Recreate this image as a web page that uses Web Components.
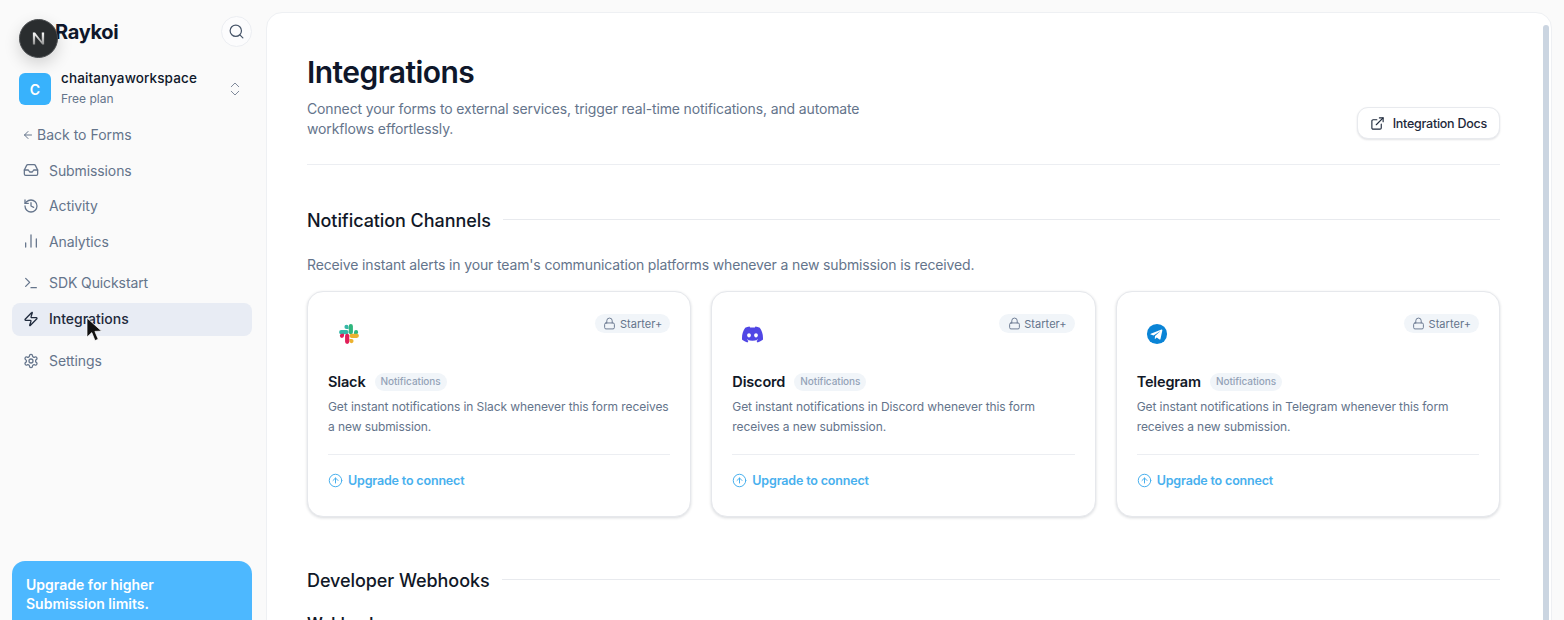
<!DOCTYPE html>
<html lang="en"><head><meta charset="utf-8"><title>Integrations</title>
<style>
html,body{margin:0;height:620px;overflow:hidden;background:#fafafa;font-family:Inter,"Liberation Sans",sans-serif;color:#0f172a}
</style></head><body>
<app-shell>
  <side-bar slot="side"></side-bar>
  <main-panel slot="main"></main-panel>
</app-shell>
<script>
const I={
 search:'<circle cx="11" cy="11" r="8"/><path d="m21 21-4.300-4.300"/>',
 updown:'<path d="m7 15 5 5 5-5"/><path d="m7 9 5-5 5 5"/>',
 back:'<path d="m12 19-7-7 7-7"/><path d="M19 12H5"/>',
 inbox:'<path d="M22 12h-6l-2 3h-4l-2-3H2"/><path d="M5.45 5.11 2 12v6a2 2 0 0 0 2 2h16a2 2 0 0 0 2-2v-6l-3.45-6.89A2 2 0 0 0 16.76 4H7.24a2 2 0 0 0-1.79 1.11z"/>',
 history:'<path d="M3 12a9 9 0 1 0 9-9 9.75 9.75 0 0 0-6.74 2.74L3 8"/><path d="M3 3v5h5"/><path d="M12 7v5l4 2"/>',
 chart:'<path d="M4 21v-6"/><path d="M12 21V3"/><path d="M20 21V9"/>',
 term:'<path d="m4 17 6-6-6-6"/><path d="M12 19h8"/>',
 zap:'<path d="M4 14a1 1 0 0 1-.78-1.63l9.9-10.2a.5.5 0 0 1 .86.46l-1.92 6.02A1 1 0 0 0 13 10h7a1 1 0 0 1 .78 1.63l-9.9 10.2a.5.5 0 0 1-.86-.46l1.92-6.02A1 1 0 0 0 11 14z"/>',
 gear:'<path d="M12.22 2h-.44a2 2 0 0 0-2 2v.18a2 2 0 0 1-1 1.73l-.43.25a2 2 0 0 1-2 0l-.15-.08a2 2 0 0 0-2.73.73l-.22.38a2 2 0 0 0 .73 2.73l.15.1a2 2 0 0 1 1 1.72v.51a2 2 0 0 1-1 1.74l-.15.09a2 2 0 0 0-.73 2.73l.22.38a2 2 0 0 0 2.73.73l.15-.08a2 2 0 0 1 2 0l.43.25a2 2 0 0 1 1 1.73V20a2 2 0 0 0 2 2h.44a2 2 0 0 0 2-2v-.18a2 2 0 0 1 1-1.73l.43-.25a2 2 0 0 1 2 0l.15.08a2 2 0 0 0 2.73-.73l.22-.39a2 2 0 0 0-.73-2.73l-.15-.08a2 2 0 0 1-1-1.74v-.5a2 2 0 0 1 1-1.74l.15-.09a2 2 0 0 0 .73-2.73l-.22-.38a2 2 0 0 0-2.73-.73l-.15.08a2 2 0 0 1-2 0l-.43-.25a2 2 0 0 1-1-1.73V4a2 2 0 0 0-2-2z"/><circle cx="12" cy="12" r="3"/>',
 ext:'<path d="M15 3h6v6"/><path d="M10 14 21 3"/><path d="M18 13v6a2 2 0 0 1-2 2H5a2 2 0 0 1-2-2V8a2 2 0 0 1 2-2h6"/>',
 lock:'<rect x="3" y="11" width="18" height="11" rx="2.500"/><path d="M7 11V7a5 5 0 0 1 10 0v4"/>',
 up:'<circle cx="12" cy="12" r="10"/><path d="m16 12-4-4-4 4"/><path d="M12 16V8"/>'
};
const svg=(n,s,w=2)=>`<svg width="${s}" height="${s}" viewBox="0 0 24 24" fill="none" stroke="currentColor" stroke-width="${w}" stroke-linecap="round" stroke-linejoin="round" style="display:block;flex:none">${I[n]}</svg>`;
const LOGOS={
 slack:`<svg width="20" height="20" viewBox="0 0 24 24" style="display:block"><path fill="#36b7a8" d="M9 1a2.500 2.500 0 0 0 0 5h2.500V3.500A2.500 2.500 0 0 0 9 1zM9 7.300H2.600a2.500 2.500 0 0 0 0 5H9a2.500 2.500 0 0 0 0-5z"/><path fill="#2eb67d" d="M23 9.800a2.500 2.500 0 0 0-5 0v2.500h2.500A2.500 2.500 0 0 0 23 9.800zM16.700 9.800V2.600a2.500 2.500 0 0 0-5 0v7.200a2.500 2.500 0 0 0 5 0z"/><path fill="#ecb22e" d="M15 23a2.500 2.500 0 0 0 0-5h-2.500v2.500A2.500 2.500 0 0 0 15 23zM15 16.700h6.400a2.500 2.500 0 0 0 0-5H15a2.500 2.500 0 0 0 0 5z"/><path fill="#e01e5a" d="M1 14.200a2.500 2.500 0 0 0 5 0v-2.500H3.500A2.500 2.500 0 0 0 1 14.200zM7.300 14.200v7.200a2.500 2.500 0 0 0 5 0v-7.200a2.500 2.500 0 0 0-5 0z"/></svg>`,
 discord:`<svg width="21" height="21" viewBox="0 0 24 24" style="display:block"><path fill="#5046e5" d="M20.320 4.370a19.800 19.800 0 0 0-4.890-1.520.07.07 0 0 0-.08.04c-.21.38-.45.870-.61 1.250a18.270 18.270 0 0 0-5.490 0 12.640 12.640 0 0 0-.62-1.250.08.08 0 0 0-.08-.04 19.740 19.740 0 0 0-4.880 1.520.07.07 0 0 0-.03.030C.530 9.050-.320 13.580.100 18.060a.08.08 0 0 0 .03.060 19.900 19.900 0 0 0 5.990 3.030.08.08 0 0 0 .08-.03c.46-.63.870-1.300 1.230-1.990a.08.08 0 0 0-.04-.110 13.100 13.100 0 0 1-1.870-.89.08.08 0 0 1-.01-.130l.37-.290a.07.07 0 0 1 .08-.010c3.930 1.790 8.180 1.790 12.060 0a.07.07 0 0 1 .08.010l.37.290a.08.08 0 0 1-.01.130 12.300 12.300 0 0 1-1.870.890.08.08 0 0 0-.04.110c.36.700.77 1.360 1.230 1.990a.08.08 0 0 0 .08.030 19.840 19.840 0 0 0 6-3.030.08.08 0 0 0 .03-.060c.5-5.180-.84-9.670-3.550-13.660a.06.060 0 0 0-.03-.030zM8.020 15.330c-1.180 0-2.160-1.090-2.160-2.420 0-1.330.96-2.420 2.160-2.420 1.210 0 2.180 1.100 2.160 2.420 0 1.330-.96 2.420-2.160 2.420zm7.980 0c-1.180 0-2.160-1.090-2.160-2.420 0-1.330.96-2.420 2.160-2.420 1.210 0 2.180 1.100 2.160 2.420 0 1.330-.95 2.420-2.160 2.420z"/></svg>`,
 telegram:`<svg width="22" height="22" viewBox="0 0 24 24" style="display:block"><circle cx="12" cy="12" r="11" fill="#0a84d6" /><path fill="#fff" d="M5.200 11.800 16.900 7.200c.6-.2 1 .1.900.9l-2 9.300c-.1.700-.6.800-1.100.5l-3-2.200-1.500 1.400c-.2.200-.3.300-.6.300l.2-3.100 5.500-5c.2-.2 0-.3-.3-.1l-6.800 4.300-2.900-.9c-.7-.2-.7-.6.100-1z"/></svg>`
};
function def(name,css,html){
  customElements.define(name,class extends HTMLElement{
    constructor(){super();const r=this.attachShadow({mode:'open'});
      r.innerHTML=`<style>${css}</style>`+(typeof html==='function'?html(this):html);}
  });
}
def('app-shell',`:host{display:flex;height:620px;width:1564px;overflow:hidden;position:relative}
 .s{flex:0 0 266px;display:block;height:620px}.m{flex:1;min-width:0;padding:12px 12px 0 0;display:flex}`,
 `<div class="s"><slot name="side"></slot></div><div class="m"><slot name="main"></slot></div>`);

def('nav-item',`:host{display:flex;align-items:center;gap:10px;height:33.5px;padding:0 11px;border-radius:8px;font-size:14px;color:#64748b;letter-spacing:-.1px}
 :host([active]){background:#e8ecf4;color:#1e293b;font-weight:500;height:33px;letter-spacing:0;padding-bottom:2px;box-sizing:border-box}
 :host([tight]){gap:3px;padding:0 10px;letter-spacing:0}`,
 el=>`${svg(el.getAttribute('icon'),el.hasAttribute('tight')?12:16,el.hasAttribute('tight')?2:1.9)}<slot></slot>`);

def('side-bar',`:host{display:flex;flex-direction:column;height:620px;box-sizing:border-box;padding:0 14px 0 12px;position:relative;overflow:hidden}
 .top{display:flex;align-items:center;justify-content:space-between;height:31px;margin-top:16px}
 .brand{font-size:20px;font-weight:700;letter-spacing:-.3px;color:#0f172a;margin-left:43px}
 .sb{width:31px;height:31px;box-sizing:border-box;border:1px solid #eceef2;border-radius:50%;background:#fcfcfd;display:flex;align-items:center;justify-content:center;color:#475569}
 .ws{display:flex;align-items:center;margin:26px 0 0 7px;height:32px}
 .av{width:32px;height:32px;border-radius:6px;background:#38b2fc;color:#fff;font-weight:600;font-size:14px;display:flex;align-items:center;justify-content:center}
 .wt{margin-left:10px;flex:1}
 .wn{font-size:13.5px;font-weight:500;color:#0f172a;line-height:17px;margin-top:-2px;letter-spacing:.12px}
 .wp{font-size:12px;color:#64748b;line-height:16px;margin-top:4px}
 .ch{color:#7c8798;margin-right:8px}
 nav{display:flex;flex-direction:column;gap:2px;margin-top:13px}
 .gap{height:4px}.gap2{height:4px}
 .sdk{margin-bottom:1.5px}
 .up{position:absolute;left:12px;top:561px;width:240px;height:120px;box-sizing:border-box;background:#4db8ff;border-radius:13px;padding:14px;color:#fff;font-weight:600;font-size:14px;line-height:19px}`,
 `<div class="top"><span class="brand">Raykoi</span><div class="sb">${svg('search',17,1.7)}</div></div>
 <div class="ws"><div class="av">C</div><div class="wt"><div class="wn">chaitanyaworkspace</div><div class="wp">Free plan</div></div><div class="ch">${svg('updown',18,1.3)}</div></div>
 <nav>
 <nav-item icon="back" tight>Back to Forms</nav-item>
 <nav-item icon="inbox">Submissions</nav-item>
 <nav-item icon="history">Activity</nav-item>
 <nav-item icon="chart">Analytics</nav-item>
 <div class="gap"></div>
 <nav-item icon="term" class="sdk">SDK Quickstart</nav-item>
 <nav-item icon="zap" active>Integrations</nav-item>
 <div class="gap2"></div>
 <nav-item icon="gear">Settings</nav-item>
 </nav>
 <div class="up">Upgrade for higher<br>Submission limits.</div>`);

def('section-title',`:host{display:flex;align-items:center;gap:12px;font-size:18px;font-weight:500;color:#111827;line-height:24px;letter-spacing:-.07px}
 i{flex:1;height:1px;background:#e8eaee;margin-bottom:3px}`,`<slot></slot><i></i>`);

def('integration-card',`:host{display:block;box-sizing:border-box;height:226px;padding:20px;background:#fff;border:1px solid #e6e8ec;border-radius:16px;box-shadow:0 1px 3px rgba(15,23,42,.16)}
 .h{display:flex;justify-content:space-between;align-items:flex-start;height:44px}
 .logo{width:41px;height:44px;display:flex;align-items:center;justify-content:center}
 .lock{display:flex;align-items:center;gap:3.500px;height:19px;padding:0 8px 0 8.500px;border-radius:10px;background:#f1f5f9;color:#64748b;font-size:11px;margin-top:2px;letter-spacing:.04px}
 .t{display:flex;align-items:center;gap:9px;margin-top:15px;height:20px}
 b{font-size:14.5px;font-weight:600;color:#111827;letter-spacing:-.15px}
 .n{font-size:10px;color:#94a3b8;background:#f1f5f9;border-radius:10px;height:18px;line-height:16px;padding:0 6px;font-weight:500;margin-top:1px;letter-spacing:-.05px}
 p{margin:6px 0 0;font-size:12px;line-height:20px;color:#64748b;letter-spacing:-.085px;height:40px}
 hr{border:0;height:1px;background:#eceef2;margin:17px 0 0}
 .u{display:flex;align-items:center;gap:5px;margin-top:17px;color:#48b0ee;font-size:12.5px;font-weight:600;height:17px;letter-spacing:-.17px}`,
 el=>{const n=el.getAttribute('name');return `<div class="h"><div class="logo">${LOGOS[n.toLowerCase()]}</div><div class="lock">${svg('lock',13,1.7)}Starter+</div></div>
 <div class="t"><b>${n}</b><span class="n">Notifications</span></div>
 <p>Get instant notifications in ${n} whenever this form receives a new submission.</p><hr>
 <div class="u">${svg('up',15,1.6)}Upgrade to connect</div>`});

def('docs-button',`:host{display:flex;align-items:center;gap:8px;height:32px;box-sizing:border-box;padding:0 12px;background:#fff;border:1px solid #e8eaee;border-radius:11px;box-shadow:0 1px 2px rgba(15,23,42,.12);font-size:12.5px;font-weight:500;color:#1e293b;letter-spacing:-.25px}`,
 `${svg('ext',15,1.8)}<slot></slot>`);

def('main-panel',`:host{display:block;flex:1;min-width:0;height:640px;position:relative;box-sizing:border-box;background:#fff;border:1px solid #eef0f3;border-radius:16px 16px 0 0;padding:39px 51px 0 40px;overflow:hidden}
 .hd{display:flex;justify-content:space-between;align-items:flex-end;padding-bottom:25px;border-bottom:1px solid #eceef2}
 h1{margin:0;font-size:30px;line-height:40px;font-weight:600;letter-spacing:-.55px;color:#0f172a}
 .sub{margin:7px 0 0;width:580px;font-size:14px;line-height:20px;color:#64748b;letter-spacing:-.14px}
 section-title{margin-top:43.500px}
 .d{margin:22.500px 0 0;font-size:14px;line-height:20px;color:#64748b;letter-spacing:-.14px}
 .g{display:grid;grid-template-columns:repeat(3,1fr);gap:20px;margin-top:16px}
 section-title.w2{margin-top:51.500px}
 .wh{margin-top:21.500px;font-size:15.500px;font-weight:600;color:#111827;line-height:20px}
 .bar{position:absolute;right:2px;top:12px;width:6px;height:620px;background:#cbd5e1;border-radius:3px}`,
 `<div class="hd"><div><h1>Integrations</h1><p class="sub">Connect your forms to external services, trigger real-time notifications, and automate workflows effortlessly.</p></div><docs-button>Integration Docs</docs-button></div>
 <section-title>Notification Channels</section-title>
 <p class="d">Receive instant alerts in your team's communication platforms whenever a new submission is received.</p>
 <div class="g"><integration-card name="Slack"></integration-card><integration-card name="Discord"></integration-card><integration-card name="Telegram"></integration-card></div>
 <section-title class="w2">Developer Webhooks</section-title>
 <div class="wh">Webhooks</div>
 <div class="bar"></div>`);

def('dev-badge',`:host{position:fixed;left:19px;top:19px;width:39px;height:39px;border-radius:50%;background:#2a2d2f;border:1px solid #4a4d50;box-sizing:border-box;display:flex;align-items:center;justify-content:center;box-shadow:0 6px 16px rgba(0,0,0,.16)}`,
 `<svg width="15" height="15" viewBox="0 0 16 16"><defs><linearGradient id="g" x1="0" y1="0" x2="0" y2="1"><stop offset="0" stop-color="#fff"/><stop offset="1" stop-color="#8f8f8f"/></linearGradient></defs><path fill="url(#g)" d="M2 1.500h2.300l7.200 9.300V1.500H14v13h-2L4.400 5v9.500H2z"/></svg>`);

def('mouse-cursor',`:host{position:fixed;left:86px;top:317px;width:18px;height:26px;pointer-events:none}`,
 `<svg width="18" height="26" viewBox="0 0 18 26" style="display:block"><path fill="#111" stroke="#fff" stroke-width=".7" d="M1 1v19l4.800-4.400 3.200 8 3.200-1.300-3.300-7.900 6.600-.3z"/></svg>`);
document.body.insertAdjacentHTML('beforeend','<dev-badge></dev-badge><mouse-cursor></mouse-cursor>');
</script>
</body></html>
